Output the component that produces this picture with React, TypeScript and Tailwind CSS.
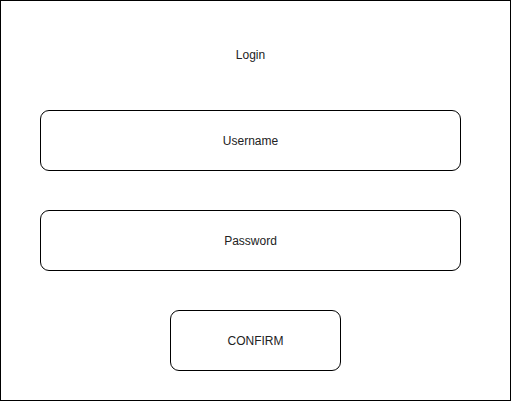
export default function App() {
  return (
    <div
      className="w-[511px] h-[401px] border border-black bg-white text-[#222222] text-[12px] leading-[14px]"
      style={{ fontFamily: '"Liberation Sans", Arial, sans-serif' }}
    >
      <div className="flex flex-col pt-[39px] pl-[39px]">
        <div className="flex h-[30px] w-[421px] items-center justify-center">
          Login
        </div>
        <div className="mt-[40px] flex h-[61px] w-[421px] items-center justify-center rounded-[9px] border border-black">
          Username
        </div>
        <div className="mt-[39px] flex h-[61px] w-[421px] items-center justify-center rounded-[9px] border border-black">
          Password
        </div>
        <div className="ml-[130px] mt-[39px] flex h-[61px] w-[171px] items-center justify-center rounded-[9px] border border-black">
          CONFIRM
        </div>
      </div>
    </div>
  );
}
